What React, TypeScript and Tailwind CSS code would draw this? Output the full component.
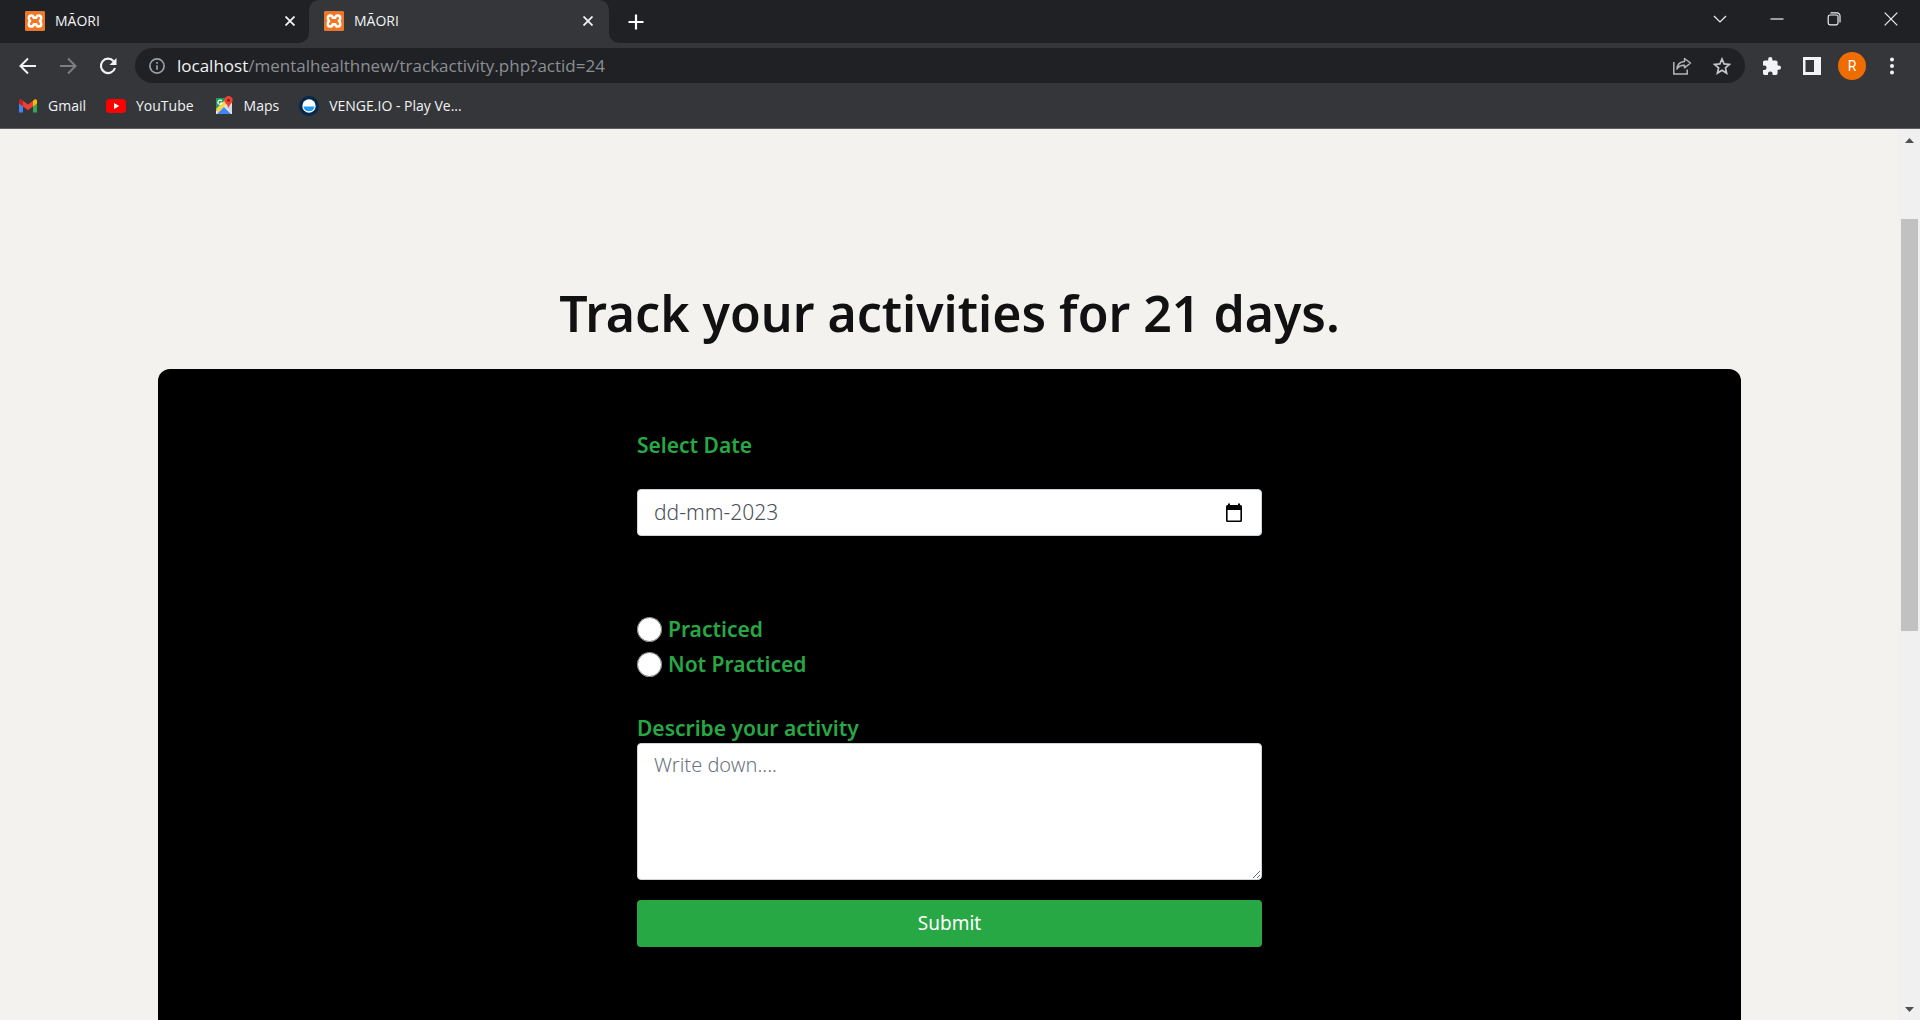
import type { ReactNode } from 'react';

const chromeFont = "font-['Open_Sans','Noto_Sans',sans-serif]";
const pageFont = "font-['Noto_Sans','Open_Sans',sans-serif]";

function Favicon() {
  return (
    <svg viewBox="0 0 20 20" className="size-5 shrink-0" aria-hidden="true">
      <rect width="20" height="20" rx="1.5" fill="#f37623" />
      <rect x="0.5" y="0.5" width="19" height="19" rx="1" fill="none" stroke="#dd7a38" />
      <path
        d="M6.300 4.500C8 4.500 8.500 5.500 8.700 6.800h2.600c.2-1.300.7-2.300 2.400-2.300 1.600 0 2.500 1 2.500 2.600 0 1.300-.5 2.200-1.300 2.900.8.7 1.300 1.600 1.300 2.900 0 1.600-.9 2.600-2.500 2.600-1.700 0-2.200-1-2.400-2.300H8.700C8.500 14.500 8 15.500 6.300 15.500c-1.600 0-2.500-1-2.500-2.600 0-1.300.5-2.200 1.300-2.900-.8-.7-1.300-1.600-1.300-2.900 0-1.600.9-2.600 2.500-2.600z"
        fill="none"
        stroke="#fff"
        strokeWidth="2.500"
        strokeLinejoin="round"
      />
      <path d="M8.300 10h3.400" stroke="#f37623" strokeWidth="2" />
    </svg>
  );
}

function Tab({ title, active = false }: { title: string; active?: boolean }) {
  return (
    <div className={active ? 'relative flex h-full w-[300px] items-center rounded-t-[10px] bg-[#35363a] pb-0.5 pl-[15px] pr-3' : 'flex h-full w-[300px] items-center pb-0.5 pl-4 pr-2.5'}>
      {active && (
        <>
          <span className="absolute bottom-0 -left-2.5 size-2.5 bg-[#35363a]">
            <span className="block size-full rounded-br-full bg-[#202124]" />
          </span>
          <span className="absolute bottom-0 -right-2.5 size-2.5 bg-[#35363a]">
            <span className="block size-full rounded-bl-full bg-[#202124]" />
          </span>
        </>
      )}
      <button type="button" role="tab" aria-selected={active} className="flex flex-1 items-center gap-2.5 text-sm text-[#f1f3f4]">
        <Favicon />
        {title}
      </button>
      <button type="button" aria-label={`Close ${title}`} className="grid size-[18px] place-items-center">
        <svg viewBox="0 0 10 10" className="size-2.5" fill="none" stroke="#f1f3f4" strokeWidth="1.8" aria-hidden="true">
          <path d="M.5.5l9 9M9.500.5l-9 9" />
        </svg>
      </button>
    </div>
  );
}

function IconButton({ label, children }: { label: string; children: ReactNode }) {
  return (
    <button type="button" aria-label={label} className="grid h-8 w-10 shrink-0 place-items-center">
      {children}
    </button>
  );
}

function WindowButton({ label, d }: { label: string; d: string }) {
  return (
    <button type="button" aria-label={label} className="grid h-[37px] w-[57px] place-items-center">
      <svg viewBox="0 0 14 14" className="size-3.5" fill="none" stroke="#f1f1f1" strokeWidth="1.2" aria-hidden="true">
        <path d={d} />
      </svg>
    </button>
  );
}

function Bookmark({ label, children }: { label: string; children: ReactNode }) {
  return (
    <a href="#" className="flex items-center gap-2.5 text-sm text-[#f1f3f4]">
      <svg viewBox="0 0 20 20" className="size-5" aria-hidden="true">
        {children}
      </svg>
      {label}
    </a>
  );
}

function BrowserChrome() {
  return (
    <header className={`shrink-0 border-b border-[#5f6064] bg-[#35363a] ${chromeFont}`}>
      <div className="flex h-[43px] items-start justify-between bg-[#202124]">
        <div role="tablist" className="flex h-full items-center pl-[9px]">
          <Tab title="MĀORI" />
          <Tab title="MĀORI" active />
          <button type="button" aria-label="New tab" className="ml-3 grid size-[30px] place-items-center">
            <svg viewBox="0 0 16 16" className="size-4" stroke="#fff" strokeWidth="2.200" aria-hidden="true">
              <path d="M8 .5v15M.5 8h15" />
            </svg>
          </button>
        </div>
        <div className="flex pr-px">
          <WindowButton label="Search tabs" d="M1 4l6 6 6-6" />
          <WindowButton label="Minimize" d="M.5 7h13" />
          <WindowButton label="Restore" d="M3 3h6.500a1.500 1.500 0 0 1 1.500 1.500V11a1.800 1.800 0 0 1-1.500 1.800H3A1.800 1.800 0 0 1 1.200 11V4.800A1.800 1.800 0 0 1 3 3zM3.500.9H10A3 3 0 0 1 13 4v6.500" />
          <WindowButton label="Close window" d="M.7.700l12.600 12.600M13.300.700L.7 13.300" />
        </div>
      </div>

      <nav aria-label="Browser toolbar" className="flex h-[45px] items-center px-2">
        <IconButton label="Back">
          <svg viewBox="0 0 18 18" className="size-[18px]" fill="none" stroke="#f1f3f4" strokeWidth="2" aria-hidden="true">
            <path d="M17 9H2M9 1.500L1.500 9 9 16.500" />
          </svg>
        </IconButton>
        <IconButton label="Forward">
          <svg viewBox="0 0 18 18" className="size-[18px]" fill="none" stroke="#7d7e82" strokeWidth="2" aria-hidden="true">
            <path d="M1 9h15M9 1.500L16.500 9 9 16.500" />
          </svg>
        </IconButton>
        <IconButton label="Reload">
          <svg viewBox="0 0 18 18" className="size-[18px]" fill="none" stroke="#f1f3f4" strokeWidth="2.100" aria-hidden="true">
            <path d="M14.600 4.200A7.200 7.200 0 1 0 16 11" />
            <path d="M17.500 1v7h-7z" fill="#f1f3f4" stroke="none" />
          </svg>
        </IconButton>
        <div className="ml-[7px] flex h-[35px] flex-1 items-center rounded-full bg-[#202124] pl-3.5 pr-[3px]">
          <svg viewBox="0 0 16 16" className="mr-3 size-4" fill="none" stroke="#9aa0a6" strokeWidth="1.700" aria-hidden="true">
            <circle cx="8" cy="8" r="7.100" />
            <path d="M8 7.200v4.600M8 4v1.800" />
          </svg>
          <div role="textbox" aria-label="Address" tabIndex={0} className="flex-1 text-[17px] leading-6 text-[#8b8f94]">
            <span className="text-[#f1f3f4]">localhost</span>/mentalhealthnew/trackactivity.php?actid=24
          </div>
          <IconButton label="Share">
            <svg viewBox="0 0 20 20" className="size-5" fill="none" stroke="#b4b5b8" strokeWidth="1.500" aria-hidden="true">
              <path d="M1.800 6v12h13.400v-4.500" />
              <path d="M12.500 2.500L18.500 7l-6 4.800V9.200C9 9.100 6.500 10.200 5 13c.2-4 2.800-7.300 7.500-7.600z" strokeLinejoin="round" />
            </svg>
          </IconButton>
          <IconButton label="Bookmark this tab">
            <svg viewBox="0 0 18 18" className="size-[18px]" fill="none" stroke="#c4c6c9" strokeWidth="1.700" aria-hidden="true">
              <path d="M9 2l2.100 4.900 5.300.5-4 3.500 1.200 5.200L9 13.300l-4.600 2.800 1.200-5.200-4-3.500 5.300-.5z" />
            </svg>
          </IconButton>
        </div>
        <div className="ml-[7px] flex">
          <IconButton label="Extensions">
            <svg viewBox="2 1 21 21" className="size-[18px]" fill="#f1f3f4" aria-hidden="true">
              <path d="M20.500 11H19V7c0-1.100-.9-2-2-2h-4V3.500a2.500 2.500 0 0 0-5 0V5H4c-1.100 0-2 .9-2 2v3.800h1.500a2.700 2.700 0 0 1 0 5.400H2V20c0 1.100.9 2 2 2h3.800v-1.500a2.700 2.700 0 0 1 5.400 0V22H17c1.100 0 2-.9 2-2v-4h1.500a2.500 2.500 0 0 0 0-5z" />
            </svg>
          </IconButton>
          <IconButton label="Side panel">
            <svg viewBox="0 0 18 18" className="size-[18px]" aria-hidden="true">
              <path fillRule="evenodd" d="M0 0h18v18H0zM2.500 3v12H11V3z" fill="#f1f3f4" />
            </svg>
          </IconButton>
          <IconButton label="Profile R">
            <span className="grid size-7 place-items-center rounded-full bg-[#ef6c00] font-['Roboto',sans-serif] text-sm text-white">R</span>
          </IconButton>
          <IconButton label="Menu">
            <svg viewBox="0 0 4 18" className="h-[18px] w-1" fill="#f1f3f4" aria-hidden="true">
              <circle cx="2" cy="2.500" r="2" />
              <circle cx="2" cy="9" r="2" />
              <circle cx="2" cy="15.500" r="2" />
            </svg>
          </IconButton>
        </div>
      </nav>

      <nav aria-label="Bookmarks" className="flex h-10 items-center gap-5 pb-1 pl-[18px]">
        <Bookmark label="Gmail">
          <path d="M1 5v11.500h4V9z" fill="#4285f4" />
          <path d="M19 5v11.500h-4V9z" fill="#34a853" />
          <path d="M15 4.800L16.500 3.500C17.800 2.600 19 3.500 19 5v2.500l-4 3z" fill="#fbbc04" />
          <path d="M5 10.500V4.800l5 3.800 5-3.800v5.700l-5 3.700z" fill="#ea4335" />
          <path d="M1 5c0-1.500 1.200-2.400 2.500-1.500L5 4.800v5.700l-4-3z" fill="#c5221f" />
        </Bookmark>
        <Bookmark label="YouTube">
          <rect y="3" width="20" height="14" rx="3.500" fill="#f00" />
          <path d="M8 7v6l5.200-3z" fill="#fff" />
        </Bookmark>
        <Bookmark label="Maps">
          <path d="M2 2h16v16H2z" fill="#e8eaed" />
          <path d="M2 2h12L2 15z" fill="#1e9e58" />
          <path d="M2 13L13 2l2 3L4 17z" fill="#fdd447" />
          <path d="M3 18l7-7 7 7z" fill="#4285f4" />
          <path d="M10.500 10l7.500 7V9z" fill="#d5d7da" />
          <path d="M7.800 5.100A2.100 2.100 0 1 0 8 7H6" fill="none" stroke="#fff" strokeWidth="1.200" />
          <path d="M14.500 0a4.200 4.200 0 0 0-4.200 4.200c0 3.100 3.700 4.300 4.200 8.300.5-4 4.200-5.200 4.200-8.300A4.200 4.200 0 0 0 14.500 0z" fill="#ea4335" />
          <circle cx="14.500" cy="4.200" r="1.500" fill="#8c1d18" />
        </Bookmark>
        <Bookmark label="VENGE.IO - Play Ve...">
          <circle cx="10" cy="10" r="10" fill="#06284b" />
          <circle cx="10" cy="10" r="6.700" fill="#fff" />
          <path d="M4.500 10.500h11a5.500 4.800 0 0 1-11 0z" fill="#1e9bf5" />
        </Bookmark>
      </nav>
    </header>
  );
}

function Scrollbar() {
  return (
    <div aria-hidden="true" className="flex w-[21px] shrink-0 flex-col items-center bg-[#f0f0f0]">
      <svg viewBox="0 0 21 21" className="size-[21px]" fill="#505050">
        <path d="M6 14l4.500-5L15 14z" />
      </svg>
      <div className="flex-[69]" />
      <div className="w-[17px] flex-[412] bg-[#c1c1c1]" />
      <div className="flex-[368]" />
      <svg viewBox="0 0 21 21" className="size-[21px]" fill="#505050">
        <path d="M6 8l4.500 5L15 8z" />
      </svg>
    </div>
  );
}

const labelStyle = 'block text-[21px] font-semibold leading-[30px] text-[#28a745]';

function ActivityForm() {
  return (
    <form className="mx-auto w-full max-w-[625px]" onSubmit={(e) => e.preventDefault()}>
      <label htmlFor="date" className={labelStyle}>
        Select Date
      </label>
      <div className="mt-[29px] flex h-[47px] items-center rounded border border-[#ced4da] bg-white pl-4 pr-[18px]">
        <input id="date" type="text" defaultValue="dd-mm-2023" className="min-w-0 flex-1 pb-0.5 text-[21px] font-light leading-[30px] text-[#495057] outline-none" />
        <button type="button" aria-label="Open calendar" className="shrink-0">
          <svg viewBox="0 0 18 20" className="h-5 w-[18px]" aria-hidden="true">
            <path fillRule="evenodd" d="M1 3.500A1.500 1.500 0 0 1 2.500 2H3V.5h2V2h8V.5h2V2h.5A1.500 1.500 0 0 1 17 3.500v14a1.500 1.500 0 0 1-1.500 1.500h-13A1.500 1.500 0 0 1 1 17.500zM2.600 7v10.400h12.800V7z" fill="#000" />
          </svg>
        </button>
      </div>

      <div role="radiogroup" aria-label="Status" className="mt-[76px]">
        {['Practiced', 'Not Practiced'].map((option) => (
          <label key={option} className="flex h-[35px] items-center gap-1.5 text-[21px] font-semibold text-[#28a745]">
            <input type="radio" name="status" value={option} className="size-[25px]" />
            {option}
          </label>
        ))}
      </div>

      <label htmlFor="description" className={`mt-[31px] ${labelStyle}`}>
        Describe your activity
      </label>
      <textarea
        id="description"
        placeholder="Write down...."
        className="block h-[137px] w-full resize rounded border border-[#ced4da] bg-white px-4 py-1.5 text-[20px] font-light leading-[30px] text-[#495057] placeholder:text-[#6c757d]"
      />
      <button type="submit" className="mt-5 block h-[47px] w-full rounded bg-[#28a745] text-[19px] text-white">
        Submit
      </button>
    </form>
  );
}

export default function App() {
  return (
    <div className="flex h-screen flex-col overflow-hidden">
      <BrowserChrome />
      <div className="flex min-h-0 flex-1">
        <main className={`flex min-w-0 flex-1 flex-col items-center overflow-hidden bg-[#f3f2ee] pt-[154px] ${pageFont}`}>
          <h1 className="text-center text-[50px] font-semibold leading-[60px] text-[#111]">Track your activities for 21 days.</h1>
          <section className="mt-[26px] w-10/12 flex-1 rounded-t-xl bg-black pt-[61px]">
            <ActivityForm />
          </section>
        </main>
        <Scrollbar />
      </div>
    </div>
  );
}
